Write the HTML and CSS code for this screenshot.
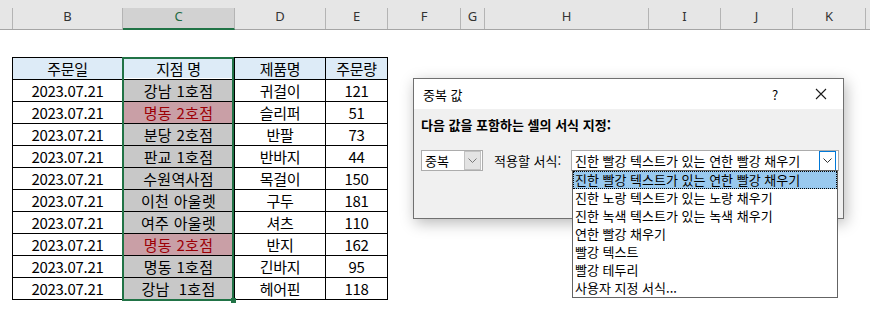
FILE: index.html
```html
<!DOCTYPE html>
<html lang="ko">
<head>
    <meta charset="UTF-8">
    <title>중복 값</title>
    <link rel="stylesheet" href="styles.css">
</head>
<body>
    <div class="colbar">
        <div class="col col-a"></div>
        <div class="col col-b">B</div>
        <div class="col col-c selected">C</div>
        <div class="col col-d">D</div>
        <div class="col col-e">E</div>
        <div class="col col-f">F</div>
        <div class="col col-g">G</div>
        <div class="col col-h">H</div>
        <div class="col col-i">I</div>
        <div class="col col-j">J</div>
        <div class="col col-k">K</div>
    </div>

    <div class="sheet">
        <table class="grid">
            <colgroup>
                <col class="w-b"><col class="w-c"><col class="w-d"><col class="w-e">
            </colgroup>
            <tr class="head">
                <td>주문일</td><td class="active">지점 명</td><td>제품명</td><td>주문량</td>
            </tr>
            <tr><td>2023.07.21</td><td class="sel">강남 1호점</td><td>귀걸이</td><td>121</td></tr>
            <tr><td>2023.07.21</td><td class="sel dup">명동 2호점</td><td>슬리퍼</td><td>51</td></tr>
            <tr><td>2023.07.21</td><td class="sel">분당 2호점</td><td>반팔</td><td>73</td></tr>
            <tr><td>2023.07.21</td><td class="sel">판교 1호점</td><td>반바지</td><td>44</td></tr>
            <tr><td>2023.07.21</td><td class="sel">수원역사점</td><td>목걸이</td><td>150</td></tr>
            <tr><td>2023.07.21</td><td class="sel">이천 아울렛</td><td>구두</td><td>181</td></tr>
            <tr><td>2023.07.21</td><td class="sel">여주 아울렛</td><td>셔츠</td><td>110</td></tr>
            <tr><td>2023.07.21</td><td class="sel dup">명동 2호점</td><td>반지</td><td>162</td></tr>
            <tr><td>2023.07.21</td><td class="sel">명동 1호점</td><td>긴바지</td><td>95</td></tr>
            <tr><td>2023.07.21</td><td class="sel">강남&nbsp;&nbsp;1호점</td><td>헤어핀</td><td>118</td></tr>
        </table>
    </div>

    <!-- selection frame over column C -->
    <div class="selection"></div>
    <div class="fill-handle"></div>

    <div class="dialog">
        <div class="dlg-title">
            <span class="dlg-name">중복 값</span>
            <span class="dlg-help">?</span>
            <svg class="dlg-close" width="12" height="12" viewBox="0 0 12 12">
                <path d="M1 1 L11 11 M11 1 L1 11" stroke="#1a1a1a" stroke-width="1.1" fill="none"/>
            </svg>
        </div>
        <div class="dlg-body">
            <div class="dlg-label">다음 값을 포함하는 셀의 서식 지정:</div>
            <div class="dlg-row">
                <div class="combo combo-kind">
                    <span class="combo-text">중복</span>
                    <span class="combo-btn">
                        <svg width="9" height="5" viewBox="0 0 9 5"><path d="M0.5 0.5 L4.5 4.5 L8.5 0.5" stroke="#777" fill="none"/></svg>
                    </span>
                </div>
                <span class="row-label">적용할 서식:</span>
                <div class="combo combo-format">
                    <span class="combo-text">진한 빨강 텍스트가 있는 연한 빨강 채우기</span>
                    <span class="combo-btn focus">
                        <svg width="9" height="5" viewBox="0 0 9 5"><path d="M0.5 0.5 L4.5 4.5 L8.5 0.5" stroke="#333" fill="none"/></svg>
                    </span>
                    <ul class="listbox">
                        <li class="current">진한 빨강 텍스트가 있는 연한 빨강 채우기</li>
                        <li>진한 노랑 텍스트가 있는 노랑 채우기</li>
                        <li>진한 녹색 텍스트가 있는 녹색 채우기</li>
                        <li>연한 빨강 채우기</li>
                        <li>빨강 텍스트</li>
                        <li>빨강 테두리</li>
                        <li>사용자 지정 서식...</li>
                    </ul>
                </div>
            </div>
        </div>
    </div>
</body>
</html>
```

FILE: styles.css
```css
body { margin: 0; width: 870px; height: 323px; overflow: hidden; background: #fff; position: relative; font-family: "Noto Sans CJK KR", "Noto Sans", sans-serif; }

/* column header strip */
.colbar { display: flex; height: 30px; padding-top: 8px; box-sizing: border-box; background: #e6e6e6; border-bottom: 1px solid #a5a5a5; }
.col { box-sizing: border-box; border-right: 1px solid #b4b4b4; font-family: "Noto Sans", sans-serif; font-size: 13px; color: #333; text-align: center; line-height: 17px; }
.col.selected { background: #d2d2d2; color: #1e6b43; border-bottom: 2px solid #217346; margin-bottom: -1px; }
.col-a { width: 13px; }
.col-b { width: 110px; }
.col-c { width: 112px; }
.col-d { width: 91px; }
.col-e { width: 62px; }
.col-f { width: 73px; }
.col-g { width: 24px; }
.col-h { width: 164px; }
.col-i { width: 72px; }
.col-j { width: 72px; }
.col-k { width: 73px; }

/* sheet table */
.sheet { padding: 27px 0 0 12px; }
.grid { border-collapse: collapse; table-layout: fixed; width: 376px; font-size: 15px; }
.w-b { width: 110px; }
.w-c { width: 112px; }
.w-d { width: 91px; }
.w-e { width: 62px; }
.grid td { border: 1px solid #000; height: 21px; padding: 0; text-align: center; line-height: 20px; color: #000; white-space: nowrap; letter-spacing: -0.3px; }
.grid .head td { background: #ddebf7; }
.grid td.sel { background: #c8c8c8; letter-spacing: 0.3px; }
.grid td.dup { background: #c99fa6; color: #9c0006; }
.grid td.active { box-shadow: inset 0 0 0 1px #fff; }

.selection { position: absolute; left: 122px; top: 57px; width: 112px; height: 244px; box-sizing: border-box; border: 2px solid #217346; }
.fill-handle { position: absolute; left: 231px; top: 298px; width: 5px; height: 5px; background: #217346; }

/* dialog */
.dialog { position: absolute; left: 413px; top: 78px; width: 431px; height: 141px; box-sizing: border-box; border: 1px solid #707070; background: #f0f0f0; box-shadow: 2px 4px 14px rgba(0,0,0,0.28); font-size: 13px; color: #000; }
.dlg-title { display: flex; align-items: center; height: 30px; background: #fff; padding-left: 9px; }
.dlg-name { flex: 1; }
.dlg-help { width: 12px; margin-right: 34px; text-align: center; }
.dlg-close { margin-right: 16px; }
.dlg-body { padding: 8px 5px 0 7px; }
.dlg-label { font-weight: bold; line-height: 16px; }
.dlg-row { display: flex; align-items: center; margin-top: 17px; }
.combo { position: relative; display: flex; flex-shrink: 0; align-items: center; height: 21px; box-sizing: border-box; background: #fff; border: 1px solid #acacac; }
.combo-text { flex: 1; padding-left: 3px; white-space: nowrap; line-height: 18px; }
.combo-btn { display: flex; align-items: center; justify-content: center; width: 17px; height: 19px; box-sizing: border-box; }
.combo-kind { width: 62px; }
.combo-kind .combo-btn { background: #e3e3e3; border: 1px solid #c2c2c2; margin-right: 1px; }
.row-label { margin: 0 10px 0 11px; white-space: nowrap; flex-shrink: 0; width: 67px; }
.combo-format { width: 268px; }
.combo-format .combo-btn { border: 1px solid #0078d7; margin-right: 2px; height: 20px; }
.listbox { position: absolute; top: 100%; left: 0; right: 0; margin: 0; padding: 0; list-style: none; background: #fff; border: 1px solid #646464; }
.listbox li { height: 18px; line-height: 18px; padding-left: 2px; white-space: nowrap; box-sizing: border-box; }
.listbox li.current { background: #99c9ef; outline: 1px dotted #000; outline-offset: -1px; }
```
